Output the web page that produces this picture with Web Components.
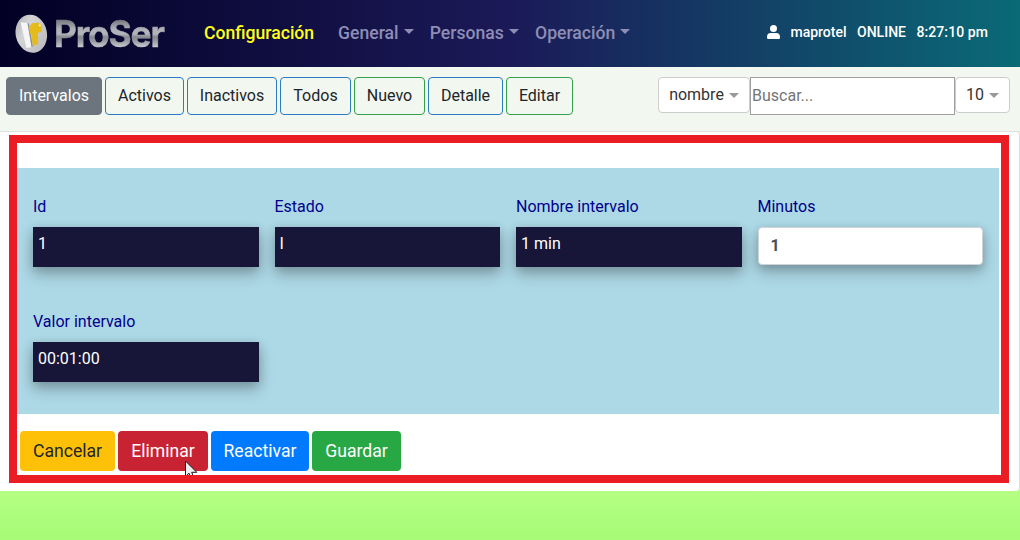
<!DOCTYPE html>
<html lang="es">
<head>
<meta charset="utf-8">
<title>ProSer</title>
<style>
html{height:100%;background:linear-gradient(#f2f8f0 0,#b5ff84 490px,#a6fa75 540px)}
body{margin:0;height:540px;overflow:hidden;font-family:Roboto,"Liberation Sans",sans-serif;font-size:16px;line-height:24px;color:#212529}
</style>
</head>
<body>
<proser-app></proser-app>
<script>
function define(name, html) {
  const t = document.createElement('template');
  t.innerHTML = html;
  customElements.define(name, class extends HTMLElement {
    constructor() {
      super();
      this.attachShadow({ mode: 'open' }).appendChild(t.content.cloneNode(true));
    }
  });
}

define('proser-logo', `
<style>
:host{display:flex;align-items:center;width:160px;height:50px;margin-left:14px}
svg{display:block;flex:none}
b{margin-left:4px;padding-right:4px;font:700 36.5px/50px Inter,sans-serif;letter-spacing:-1.2px;white-space:nowrap;color:transparent;-webkit-text-stroke:.5px transparent;background:linear-gradient(#77777f 11px,#b0b0b8 20px,#b4b4bb 25px,#888891 28px,#9a9aa2 32px,#d0d0d6 39px);-webkit-background-clip:text;background-clip:text;transform-origin:0 50%;transform:scaleX(.968)}
</style>
<svg width="36" height="44" viewBox="0 0 36 44">
  <defs>
    <linearGradient id="d" x1="0" y1="0" x2="1" y2="1"><stop offset="0" stop-color="#a9a9ae"/><stop offset=".35" stop-color="#d4d4d6"/><stop offset="1" stop-color="#b7b7bb"/></linearGradient>
  </defs>
  <ellipse cx="17.3" cy="21.7" rx="15.6" ry="19.2" fill="url(#d)" transform="rotate(-13 17.3 21.7)"/>
  <path d="M6.6 10.2 13.5 11 17.6 35.3 12.4 36Z" fill="#f5f5f5"/>
  <path d="M13.5 11 14.9 11.4 18.8 34.8 17.6 35.3Z" fill="#8c8c91"/>
  <path d="M15 14.4 16.7 13 18.4 11.2 24.2 10.4 25.2 11.7 27.5 12.1 27.7 19.7 23.9 21 24.2 31.6 18.9 34.2 17.4 22.5 15.8 21Z" fill="#e4bb19"/>
  <circle cx="25.8" cy="13.4" r="1.1" fill="#f5eec9"/>
</svg><b>ProSer</b>`);

define('nav-link', `
<style>
:host{display:flex;align-items:center;font-size:17.6px;font-weight:500;line-height:26px;color:#8e8db5;white-space:nowrap}
:host([active]){color:#ffff1c}
i{width:0;border:5.3px solid transparent;border-top-color:currentColor;border-bottom:0;margin:-3px 0 0 5px}
:host([active]) i{display:none}
</style><slot></slot><i></i>`);

define('user-status', `
<style>
:host{display:flex;align-items:center;color:#fff;font-size:14px;font-weight:500;line-height:21px;white-space:nowrap}
svg{margin:-1px 10px 0 0}span+span{margin-left:10.5px}
span:last-child{letter-spacing:.08px}
</style>
<svg width="13" height="14" viewBox="0 0 13 14"><circle cx="6.5" cy="3.5" r="3.5" fill="#fff"/><path d="M3.8 8H9.2Q13 8.2 13 12V12.8Q13 14 11.8 14H1.2Q0 14 0 12.8V12Q0 8.2 3.8 8Z" fill="#fff"/></svg>
<span>maprotel</span><span>ONLINE</span><span>8:27:10 pm</span>`);

define('app-header', `
<style>
:host{display:flex;align-items:center;height:67px;box-sizing:border-box;background:linear-gradient(90deg,#020024 0,#1b1a58 50%,#0a6a76 100%)}
nav{display:flex;align-items:center;margin:-1px 0 0 30px}
.g{margin-left:14px}.p{margin-left:16.2px}
nav-link[active]{width:120px}
user-status{margin:-2px 32px 0 auto}
</style>
<proser-logo></proser-logo>
<nav><nav-link active>Configuración</nav-link><nav-link class="g">General</nav-link><nav-link class="p">Personas</nav-link><nav-link class="p">Operación</nav-link></nav>
<user-status></user-status>`);

define('tool-button', `
<style>
:host{display:flex;align-items:center;justify-content:center;box-sizing:border-box;width:var(--w);height:38px;border:1px solid #2a7cc7;border-radius:4px;padding-bottom:1px;color:#212529;white-space:nowrap}
:host([kind=green]){border-color:#35a04b}
:host([kind=solid]){background:#6c757d;border-color:#6c757d;color:#fff}
</style><slot></slot>`);

define('select-box', `
<style>
:host{display:flex;align-items:center;justify-content:center;box-sizing:border-box;width:var(--w);height:36px;background:#fff;border:1px solid #ccc;border-radius:4px;color:#333}
i{border:5px solid transparent;border-top-color:#999;border-bottom:0;margin:1px 0 0 5px}
</style><slot></slot><i></i>`);

define('search-field', `
<style>
:host{display:block;width:205px;height:38px}
input{display:block;box-sizing:border-box;width:100%;height:100%;margin:0;padding:0 1px 1px;border:1px solid #a0a0a0;background:#fff;font:16px Roboto,sans-serif}
input::placeholder{color:#757575}
</style><input placeholder="Buscar...">`);

define('app-toolbar', `
<style>
:host{display:flex;align-items:flex-start;justify-content:space-between;box-sizing:border-box;height:65px;padding:10px 10px 0 6px;background:#f2f8f0;border-bottom:1px solid #dfe1dc}
div{display:flex;gap:3px}.s{gap:0}
</style>
<div><tool-button kind="solid" style="--w:96px">Intervalos</tool-button><tool-button style="--w:79px">Activos</tool-button><tool-button style="--w:90px">Inactivos</tool-button><tool-button style="--w:71px">Todos</tool-button><tool-button kind="green" style="--w:71px">Nuevo</tool-button><tool-button style="--w:75px">Detalle</tool-button><tool-button kind="green" style="--w:67px">Editar</tool-button></div>
<div class="s"><select-box style="--w:92px">nombre</select-box><search-field></search-field><select-box style="--w:55px">10</select-box></div>`);

define('form-field', `
<style>
:host{display:block}
label{display:block;color:#00008b;margin-bottom:8px}
.v{box-sizing:border-box;height:40px;padding:5px;background:#171538;color:#fff;box-shadow:0 8px 16px rgba(0,0,0,.2),0 3px 10px rgba(0,0,0,.19)}
:host([editable]) .v{height:38px;padding:6px 12px;border:1px solid #ced4da;border-radius:4px;background:#fff;color:#495057;font-weight:700}
</style><label><slot name="label"></slot></label><div class="v"><slot></slot></div>`);

define('action-button', `
<style>
:host{display:flex;align-items:center;justify-content:center;box-sizing:border-box;width:var(--w);height:40px;border-radius:4px;background:var(--bg);color:var(--fg,#fff);font-size:17.6px}
</style><slot></slot>`);

define('mouse-pointer', `
<style>:host{position:absolute;left:168px;top:317px;width:14px;height:15px;overflow:hidden}svg{display:block}</style>
<svg width="14" height="20"><path d="M.5 1V16.5L4 13.2 6.5 19 9 17.8 6.7 12.3H11.8Z" fill="#eee" stroke="#171717"/></svg>`);

define('record-form', `
<style>
:host{display:block;box-sizing:border-box;height:359px;padding:3px 10px 8px 9px;background:#fff;border-right:1px solid #dedede;border-radius:0 4px 4px 0}
.frame{position:relative;box-sizing:border-box;width:1000px;height:348px;border:8px solid #ea1c24;padding:25px 2px 0 0;background:#fff}
.panel{display:grid;grid-template-columns:repeat(4,1fr);grid-auto-rows:75px;column-gap:16px;row-gap:40px;box-sizing:border-box;height:246px;padding:27px 16px 0;background:#add8e6}
.actions{display:flex;gap:3px;margin:17px 0 0 3px}
</style>
<div class="frame">
<div class="panel">
<form-field><span slot="label">Id</span>1</form-field>
<form-field><span slot="label">Estado</span>I</form-field>
<form-field><span slot="label">Nombre intervalo</span>1 min</form-field>
<form-field editable><span slot="label">Minutos</span>1</form-field>
<form-field><span slot="label">Valor intervalo</span>00:01:00</form-field>
</div>
<div class="actions">
<action-button style="--w:95px;--bg:#ffc107;--fg:#212529">Cancelar</action-button>
<action-button style="--w:90px;--bg:#c82333">Eliminar</action-button>
<action-button style="--w:98px;--bg:#007bff">Reactivar</action-button>
<action-button style="--w:89px;--bg:#28a745">Guardar</action-button>
</div>
<mouse-pointer></mouse-pointer>
</div>`);

define('proser-app', `
<style>:host{display:block}</style>
<app-header></app-header><app-toolbar></app-toolbar><record-form></record-form>`);
</script>
</body>
</html>
